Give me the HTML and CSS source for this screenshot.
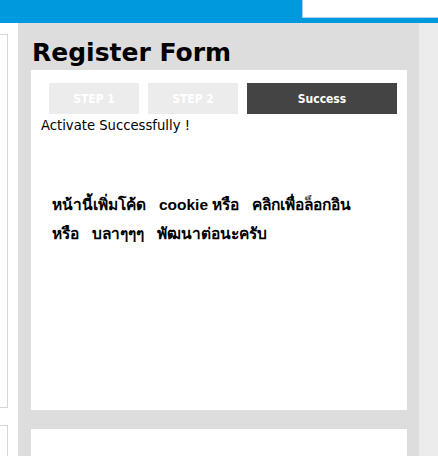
FILE: index.html
```html
<!DOCTYPE html>
<html lang="th">
<head>
    <meta charset="UTF-8">
    <meta name="viewport" content="width=device-width, initial-scale=1.0">
    <title>Register Form</title>
    <link rel="stylesheet" href="styles.css">
</head>
<body>

    <div class="topbar">
        <input type="text" class="search" aria-label="search">
    </div>

    <div class="page">
        <div class="sidebar">
            <div class="side-box tall"></div>
            <div class="side-box"></div>
        </div>

        <div class="main">
            <h2 class="title">Register Form</h2>

            <div class="card">
                <div class="steps">
                    <div class="step">STEP 1</div>
                    <div class="step">STEP 2</div>
                    <div class="step active">Success</div>
                </div>

                <div class="message">Activate Successfully !</div>

                <p class="note">หน้านี้เพิ่มโค้ด&nbsp;&nbsp; cookie หรือ&nbsp;&nbsp; คลิกเพื่อล็อกอิน หรือ&nbsp;&nbsp; บลาๆๆๆ&nbsp;&nbsp; พัฒนาต่อนะครับ</p>
            </div>

            <div class="card next"></div>
        </div>

        <div class="aside"></div>
    </div>

</body>
</html>
```

FILE: styles.css
```css
body {
    margin: 0;
    font-family: 'DejaVu Sans', sans-serif;
    color: #000;
    background-color: #fff;
    overflow: hidden;
}

.topbar {
    height: 23px;
    background-color: #0099dd;
    display: flex;
    justify-content: flex-end;
    align-items: flex-start;
}

.search {
    width: 136px;
    height: 18px;
    box-sizing: border-box;
    margin: 0;
    padding: 0;
    border: none;
    border-left: 1px solid #a9d3ea;
    border-bottom: 1px solid #a9d3ea;
    background-color: #fff;
}

.page {
    display: flex;
    height: 433px;
    overflow: hidden;
}

.sidebar {
    width: 18px;
    flex-shrink: 0;
}

.side-box {
    width: 7px;
    height: 40px;
    margin-top: 17px;
    border: 1px solid #d6d6d6;
    border-left: none;
}

.side-box.tall {
    height: 372px;
    margin-top: 11px;
}

.main {
    width: 401px;
    flex-shrink: 0;
    background-color: #dddddd;
    padding: 0 12px 0 13px;
    box-sizing: border-box;
}

.aside {
    flex: 1;
    background-color: #ececec;
}

.title {
    margin: 15px 0 2px 1px;
    font-size: 25px;
    line-height: 30px;
    font-weight: bold;
}

.card {
    background-color: #fff;
    height: 340px;
    padding: 13px 10px 0 10px;
    box-sizing: border-box;
}

.card.next {
    height: 27px;
    margin-top: 19px;
}

.steps {
    display: flex;
    gap: 9px;
    margin-left: 8px;
}

.step {
    width: 90px;
    height: 31px;
    padding-top: 2px;
    box-sizing: border-box;
    line-height: 29px;
    text-align: center;
    background-color: #ececec;
    color: #fff;
    font-family: 'DejaVu Sans Condensed', 'DejaVu Sans', sans-serif;
    font-size: 12px;
    font-weight: bold;
}

.step.active {
    width: 150px;
    background-color: #444444;
}

.message {
    font-size: 13.2px;
    line-height: 20px;
    margin-top: 2px;
}

.note {
    margin: 54px 0 0 11px;
    width: 320px;
    font-family: 'Liberation Sans', Arial, sans-serif;
    font-size: 15.5px;
    font-weight: bold;
    line-height: 29px;
}
```
